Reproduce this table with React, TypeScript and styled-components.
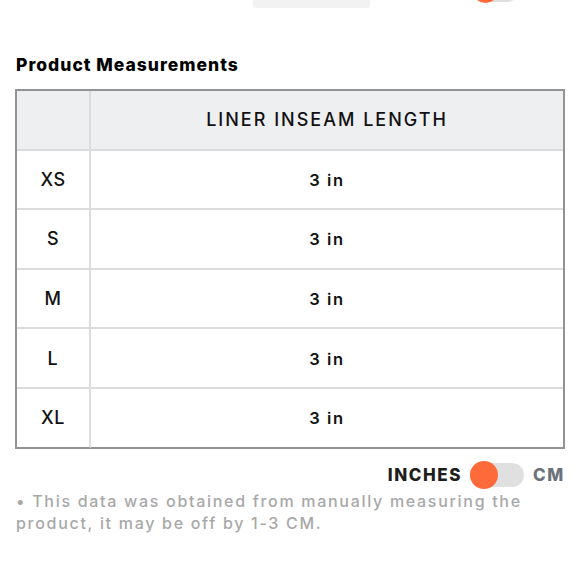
import React, { useState } from 'react';
import styled, { createGlobalStyle } from 'styled-components';

const GlobalStyle = createGlobalStyle`
  body {
    margin: 0;
    background: #fff;
    font-family: Inter, "Noto Sans", sans-serif;
    color: #111;
  }
`;

const Page = styled.div`
  width: 580px;
  height: 580px;
  overflow: hidden;
  box-sizing: border-box;
  padding: 0 15px;
`;

const TopStrip = styled.div`
  height: 8px;
  display: flex;
  align-items: flex-end;
  overflow: hidden;
  position: relative;
`;

const TopTab = styled.div`
  margin-left: 238px;
  width: 117px;
  height: 8px;
  background: #f2f2f2;
  border-radius: 0 0 3px 3px;
`;

const TopToggle = styled.div`
  margin-left: 103px;
  margin-bottom: 6px;
  width: 46px;
  height: 24px;
  border-radius: 12px;
  background: #e0e0e0;
  position: relative;
  &::before {
    content: '';
    position: absolute;
    left: -1px;
    top: -2px;
    width: 27px;
    height: 27px;
    border-radius: 50%;
    background: #ff6a3a;
  }
`;

const Title = styled.h2`
  margin: 47px 0 0 1px;
  font-size: 17.5px;
  font-weight: 800;
  letter-spacing: 1px;
  line-height: 20px;
  color: #000;
`;

const Table = styled.table`
  margin-top: 14px;
  width: 550px;
  border-collapse: separate;
  border-spacing: 0;
  border: 2px solid #939393;
  border-bottom-width: 1px;
  table-layout: fixed;
`;

const Cell = styled.td<{ $head?: boolean; $first?: boolean }>`
  height: 57.6px;
  padding: 0;
  text-align: center;
  vertical-align: middle;
  background: ${({ $head }) => ($head ? '#eeeff1' : '#fff')};
  border-bottom: 2px solid #dcdcdc;
  border-right: ${({ $first }) => ($first ? '2px solid #dcdcdc' : 'none')};
  font-size: 18px;
  font-weight: 500;
  letter-spacing: ${({ $head }) => ($head ? '2px' : '0.6px')};
  color: #111;
  tr:last-child > & {
    border-bottom: 1px solid #939393;
  }
`;

const Value = styled.span`
  font-size: 16.5px;
  font-weight: 600;
  letter-spacing: 1.6px;
`;

const UnitRow = styled.div`
  display: flex;
  justify-content: flex-end;
  align-items: center;
  margin-top: 14px;
  gap: 9px;
`;

const UnitLabel = styled.span<{ $active: boolean }>`
  font-size: 17px;
  font-weight: 800;
  letter-spacing: 1.6px;
  color: ${({ $active }) => ($active ? '#1c1c1c' : '#6b727a')};
  cursor: pointer;
`;

const Switch = styled.button<{ $on: boolean }>`
  position: relative;
  width: 54px;
  height: 24px;
  border: none;
  padding: 0;
  border-radius: 12px;
  background: #e0e0e0;
  cursor: pointer;
  margin-left: -1px;
  &::before {
    content: '';
    position: absolute;
    top: -2px;
    left: ${({ $on }) => ($on ? '27px' : '0')};
    width: 28px;
    height: 28px;
    border-radius: 50%;
    background: #ff6a3a;
    transition: left 0.2s ease;
  }
`;

const Note = styled.p`
  margin: 3px 0 0 1px;
  font-size: 16px;
  font-weight: 500;
  line-height: 22px;
  letter-spacing: 1.7px;
  color: #a8a8a8;
`;

const sizes = ['XS', 'S', 'M', 'L', 'XL'];

export default function App() {
  const [cm, setCm] = useState(false);
  const value = cm ? '7.6 cm' : '3 in';

  return (
    <Page>
      <GlobalStyle />
      <TopStrip>
        <TopTab />
        <TopToggle />
      </TopStrip>
      <Title>Product Measurements</Title>
      <Table>
        <colgroup>
          <col style={{ width: 74 }} />
          <col />
        </colgroup>
        <tbody>
          <tr>
            <Cell $head $first />
            <Cell $head>LINER INSEAM LENGTH</Cell>
          </tr>
          {sizes.map((s) => (
            <tr key={s}>
              <Cell $first>{s}</Cell>
              <Cell>
                <Value>{value}</Value>
              </Cell>
            </tr>
          ))}
        </tbody>
      </Table>
      <UnitRow>
        <UnitLabel $active={!cm} onClick={() => setCm(false)}>INCHES</UnitLabel>
        <Switch $on={cm} onClick={() => setCm(!cm)} aria-label="Toggle units" />
        <UnitLabel $active={cm} onClick={() => setCm(true)}>CM</UnitLabel>
      </UnitRow>
      <Note>• This data was obtained from manually measuring the product, it may be off by 1-3 CM.</Note>
    </Page>
  );
}
